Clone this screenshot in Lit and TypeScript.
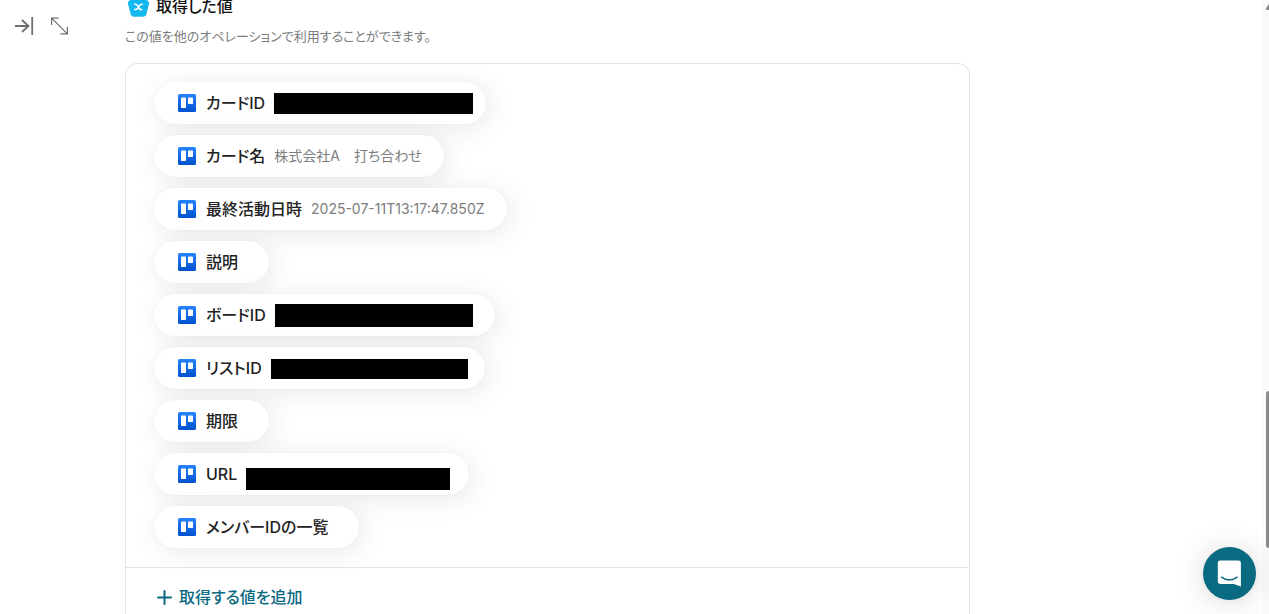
import { LitElement, html, css, nothing } from "lit";
import { customElement, property } from "lit/decorators.js";
import { styleMap } from "lit/directives/style-map.js";

interface Mask {
  width: number;
  height: number;
  shift: number;
  end: number;
}

interface Output {
  label: string;
  value?: string;
  mask?: Mask;
}

const outputs: Output[] = [
  { label: "カードID", mask: { width: 199, height: 21, shift: 0, end: 13 } },
  { label: "カード名", value: "株式会社A　打ち合わせ" },
  { label: "最終活動日時", value: "2025-07-11T13:17:47.850Z" },
  { label: "説明" },
  { label: "ボードID", mask: { width: 198, height: 23, shift: 0, end: 22 } },
  { label: "リストID", mask: { width: 197, height: 20, shift: 2, end: 17 } },
  { label: "期限" },
  { label: "URL", mask: { width: 204, height: 22, shift: 10, end: 19 } },
  { label: "メンバーIDの一覧" },
];

@customElement("output-chip")
export class OutputChip extends LitElement {
  @property({ attribute: false }) output!: Output;

  static styles = css`
    :host {
      display: block;
    }
    .chip {
      display: inline-flex;
      align-items: center;
      box-sizing: border-box;
      height: 42px;
      padding: 0 22px 0 24px;
      border-radius: 21px;
      background: #fff;
      box-shadow: 0 0 2px rgba(0, 0, 0, 0.06), 4px 4px 28px rgba(0, 0, 0, 0.09);
      vertical-align: top;
    }
    .chip.masked {
      padding-right: 0;
    }
    .logo {
      display: block;
      width: 18px;
      height: 18px;
      margin-right: 10px;
    }
    .label {
      color: #222;
      font-size: 16px;
      font-weight: 500;
      line-height: 24px;
      white-space: nowrap;
    }
    .value {
      margin-left: 9px;
      color: #7d7d7d;
      font-size: 14px;
      line-height: 24px;
      white-space: nowrap;
    }
    .mask {
      background: #000;
    }
  `;

  render() {
    const { label, value, mask } = this.output;
    return html`<div class="chip ${mask ? "masked" : ""}">
      <svg class="logo" viewBox="0 0 18 18" aria-hidden="true">
        <defs>
          <linearGradient id="g" x1="0" y1="0" x2="0" y2="1">
            <stop offset="0" stop-color="#2684ff" />
            <stop offset="1" stop-color="#0052cc" />
          </linearGradient>
        </defs>
        <rect width="18" height="18" rx="1.5" fill="url(#g)" />
        <rect x="3" y="3.500" width="5" height="10.500" rx="0.8" fill="#fff" />
        <rect x="10" y="3.500" width="5" height="6.500" rx="0.8" fill="#fff" />
      </svg>
      <span class="label">${label}</span>
      ${mask
        ? html`<span
            class="value mask"
            style=${styleMap({
              width: `${mask.width}px`,
              height: `${mask.height}px`,
              marginTop: `${mask.shift}px`,
              marginRight: `${mask.end}px`,
            })}
          ></span>`
        : html`<span class="value">${value ?? nothing}</span>`}
    </div>`;
  }
}

@customElement("app-root")
export class AppRoot extends LitElement {
  static styles = css`
    :host {
      display: grid;
      grid-template-columns: 125px minmax(0, 845px) minmax(0, 1fr) 6px;
      height: 100vh;
      overflow: hidden;
      background: #fff;
      color: #111;
      font-family: Inter, "Noto Sans CJK JP", sans-serif;
      font-feature-settings: "palt";
    }
    button {
      padding: 0;
      border: 0;
      background: none;
      font: inherit;
      font-feature-settings: inherit;
      cursor: pointer;
    }
    .tools {
      display: flex;
      align-items: flex-start;
      gap: 16px;
      padding: 16px 0 0 14px;
    }
    .tool,
    .tool svg,
    .badge,
    .add svg,
    .launcher svg {
      display: block;
    }
    .main {
      min-height: 0;
    }
    .heading {
      display: flex;
      align-items: center;
      gap: 6px;
      height: 12px;
      margin: 0;
      padding-left: 2px;
      font-size: 16px;
      font-weight: 500;
      line-height: 12px;
      white-space: nowrap;
    }
    .note {
      margin: 14px 0 17px;
      color: #7d7d7d;
      font-size: 13px;
      line-height: 20px;
    }
    .panel {
      border: 1px solid #e3e3e3;
      border-radius: 12px;
    }
    .list {
      display: grid;
      gap: 11px;
      margin: 0;
      padding: 18px 28px 19px;
      list-style: none;
    }
    .add {
      display: flex;
      align-items: center;
      gap: 7px;
      width: 100%;
      padding: 17px 31px;
      border-top: 1px solid #e3e3e3;
      color: #0a6a82;
      font-size: 16px;
      font-weight: 500;
      line-height: 24px;
    }
    .track {
      grid-column: 4;
      display: flex;
      flex-direction: column;
      align-items: flex-end;
      background: #fafafa;
      overflow: hidden;
    }
    .arrow {
      width: 3px;
      height: 6px;
      margin-top: 4px;
      background: #8b8b8b;
      clip-path: polygon(100% 0, 100% 100%, 0 100%, 0 70%);
    }
    .thumb {
      width: 3px;
      height: 157px;
      margin-top: 381px;
      border-radius: 3px 0 0 3px;
      background: #8b8b8b;
    }
    .launcher {
      position: fixed;
      right: 13px;
      bottom: 14px;
      display: grid;
      place-items: center;
      width: 53px;
      height: 53px;
      border-radius: 50%;
      background: #0a6a82;
      box-shadow: 0 1px 6px rgba(0, 0, 0, 0.06), 0 2px 32px rgba(0, 0, 0, 0.14);
    }
  `;

  render() {
    return html`
      <nav class="tools">
        <button class="tool" aria-label="閉じる">
          <svg width="20" height="20" viewBox="0 0 20 20" fill="none" stroke="#6f6f6f" stroke-width="1.8">
            <path d="M1 10h14M8 4l6.500 6-6.500 6M18.200 1v18" />
          </svg>
        </button>
        <button class="tool" aria-label="拡大">
          <svg width="20" height="20" viewBox="0 0 20 20" fill="none" stroke="#6f6f6f" stroke-width="1.2">
            <path d="M1.600 2.100l15.800 15.800M1.600 9V2.100h7M17.400 11v6.900h-7" />
          </svg>
        </button>
      </nav>
      <main class="main">
        <h2 class="heading">
          <svg class="badge" width="23" height="22" viewBox="0 0 23 22" aria-hidden="true">
            <path
              d="M10 .9q1.500-.8 3 0l8 5q1.500 1 1.100 2.700l-2.800 11q-.6 2.100-2.700 2.100H6.400q-2.100 0-2.700-2.100L.9 8.600Q.5 6.900 2 5.900z"
              fill="#13b9ee"
            />
            <path
              d="M7.700 9.200c2.300-.5 2.900 1 3.700 2.900s1.400 3.200 3.400 2.500M15.200 9.300c-1.900-.4-2.800 1-3.700 2.800s-1.900 2.900-3.900 2.400"
              fill="none"
              stroke="#fff"
              stroke-width="1.500"
              stroke-linecap="round"
            />
          </svg>
          取得した値
        </h2>
        <p class="note">この値を他のオペレーションで利用することができます。</p>
        <section class="panel">
          <ul class="list">
            ${outputs.map((o) => html`<li><output-chip .output=${o}></output-chip></li>`)}
          </ul>
          <button class="add">
            <svg width="15" height="15" viewBox="0 0 15 15" fill="none" stroke="currentColor" stroke-width="2" stroke-linecap="round">
              <path d="M7.500 1v13M1 7.500h13" />
            </svg>
            取得する値を追加
          </button>
        </section>
      </main>
      <div class="track"><div class="arrow"></div><div class="thumb"></div></div>
      <button class="launcher" aria-label="チャットを開く">
        <svg width="25" height="27" viewBox="0 0 25 27">
          <path d="M3.200 .5h18.300a2.400 2.400 0 0 1 2.400 2.400V26.500s-3.800-1.200-7-2.500H3.200A2.400 2.400 0 0 1 .8 21.600V2.900A2.400 2.400 0 0 1 3.200 .5z" fill="#fff" />
          <path d="M4.600 17.200c4.500 3.600 11 3.600 15.500 0" fill="none" stroke="#0a6a82" stroke-width="1.500" stroke-linecap="round" />
        </svg>
      </button>
    `;
  }
}
